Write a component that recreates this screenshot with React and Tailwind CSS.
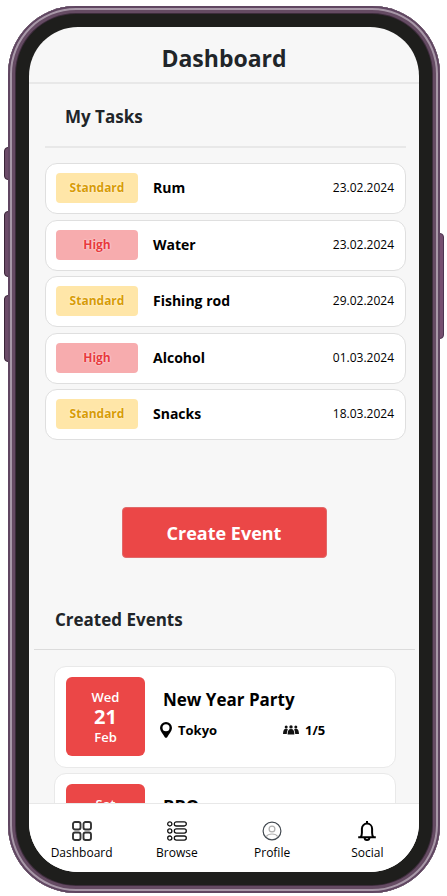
const tasks = [
  { priority: 'Standard', name: 'Rum', date: '23.02.2024' },
  { priority: 'High', name: 'Water', date: '23.02.2024' },
  { priority: 'Standard', name: 'Fishing rod', date: '29.02.2024' },
  { priority: 'High', name: 'Alcohol', date: '01.03.2024' },
  { priority: 'Standard', name: 'Snacks', date: '18.03.2024' },
];

const events = [
  { weekday: 'Wed', day: '21', month: 'Feb', title: 'New Year Party', place: 'Tokyo', people: '1/5' },
  { weekday: 'Sat', title: 'BBQ' },
];

const badgeStyles = {
  Standard: 'bg-[#ffe6a8] text-[#d89c06]',
  High: 'bg-[#f7acae] text-[#e8393d]',
};

function PinIcon() {
  return (
    <svg className="h-4 w-3" viewBox="0 0 12 16" aria-hidden="true">
      <path
        fillRule="evenodd"
        d="M6 0a6 6 0 0 1 6 6c0 3.200-3 6-4.800 9.200q-1.200 1.200-2.400 0C3 12 0 9.200 0 6a6 6 0 0 1 6-6Zm0 2.300a3.500 3.500 0 1 0 0 7 3.500 3.500 0 0 0 0-7Z"
      />
    </svg>
  );
}

function PeopleIcon() {
  return (
    <svg className="h-[10px] w-4" viewBox="0 0 16 10" fill="#111" aria-hidden="true">
      <circle cx="3.200" cy="1.900" r="1.500" />
      <circle cx="12.800" cy="1.900" r="1.500" />
      <circle cx="8" cy="1.900" r="1.700" />
      <path d="M0 9c.2-3.400.9-5.200 3.200-5.200.8 0 1.300.2 1.700.6C4.100 5.800 3.900 7.200 3.800 9ZM16 9c-.2-3.400-.9-5.200-3.200-5.200-.8 0-1.300.2-1.700.6.8 1.400 1 2.800 1.100 4.600ZM4.600 9.600C4.700 6 5.400 4.100 8 4.100s3.300 1.900 3.400 5.500Z" />
    </svg>
  );
}

function DashboardIcon() {
  return (
    <svg className="size-5" viewBox="0 0 20 20" fill="none" stroke="#333" strokeWidth="1.900" aria-hidden="true">
      <rect x="1" y="1" width="7.500" height="7.500" rx="2" />
      <rect x="11.500" y="1" width="7.500" height="7.500" rx="2" />
      <rect x="1" y="11.500" width="7.500" height="7.500" rx="2" />
      <rect x="11.500" y="11.500" width="7.500" height="7.500" rx="2" />
    </svg>
  );
}

function BrowseIcon() {
  return (
    <svg className="size-5" viewBox="0 0 20 20" fill="none" stroke="#111" strokeWidth="1.300" aria-hidden="true">
      <circle cx="2.800" cy="2.900" r="2.100" />
      <circle cx="2.800" cy="10" r="2.100" />
      <circle cx="2.800" cy="17.100" r="2.100" />
      <rect x="7.300" y=".8" width="12" height="4.200" rx="2.100" />
      <rect x="7.300" y="7.900" width="12" height="4.200" rx="2.100" />
      <rect x="7.300" y="15" width="12" height="4.200" rx="2.100" />
    </svg>
  );
}

function ProfileIcon() {
  return (
    <svg className="size-5" viewBox="0 0 20 20" fill="none" aria-hidden="true">
      <circle cx="10" cy="10" r="8.900" stroke="#444b52" strokeWidth="1.200" />
      <circle cx="10" cy="8" r="2.900" stroke="#b0b0b0" strokeWidth="1.200" />
      <path d="M4.200 15.600c1.200-2 3.300-2.600 5.800-2.600s4.600.6 5.800 2.600" stroke="#b0b0b0" strokeWidth="1.200" />
    </svg>
  );
}

function BellIcon() {
  return (
    <svg className="size-5" viewBox="0 0 20 20" fill="none" stroke="#000" strokeWidth="2" aria-hidden="true">
      <path d="M10 0v3M1.200 16.300h17.600" />
      <path d="M3.600 16.200c1-1 1.300-2.300 1.300-4.500V7.700a5.100 5.100 0 0 1 10.200 0v4c0 2.200.3 3.500 1.300 4.500" />
      <path d="M7.600 16.500c0 1.700 1 2.500 2.400 2.500s2.400-.8 2.400-2.500" />
    </svg>
  );
}

const tabs = [
  { label: 'Dashboard', Icon: DashboardIcon },
  { label: 'Browse', Icon: BrowseIcon },
  { label: 'Profile', Icon: ProfileIcon },
  { label: 'Social', Icon: BellIcon },
];

function TaskRow({ priority, name, date }) {
  return (
    <li className="flex h-[51px] items-center rounded-xl border border-[#dfdfdf] bg-white pr-[11px] pb-px pl-[10px]">
      <span
        className={`flex h-[30px] w-[82px] items-center justify-center rounded text-xs font-bold [text-shadow:0_0_2px_rgba(255,255,255,0.9)] ${badgeStyles[priority]}`}
      >
        {priority}
      </span>
      <span className="ml-[15px] flex-1 text-sm font-bold">{name}</span>
      <time className="text-xs">{date}</time>
    </li>
  );
}

function EventCard({ weekday, day, month, title, place, people }) {
  return (
    <li className="flex h-[102px] items-start rounded-xl border border-[#e9e9e9] bg-white px-[11px] pt-[10px]">
      <time className="flex size-[79px] flex-col items-center rounded-md bg-[#eb4747] pt-[10px] font-semibold text-white">
        <span className="text-[13px] leading-5">{weekday}</span>
        {day && <span className="text-xl leading-5 font-bold">{day}</span>}
        {month && <span className="text-[13px] leading-5">{month}</span>}
      </time>
      <div className="flex flex-1 flex-col pt-[11px] pl-[15px]">
        <h3 className="pl-[3px] text-[17px] leading-6 font-bold">{title}</h3>
        {place && (
          <div className="flex pt-2 text-[13px] leading-5 font-bold">
            <span className="flex w-[123px] items-center gap-[6px]">
              <PinIcon />
              {place}
            </span>
            <span className="flex items-center gap-[6px]">
              <PeopleIcon />
              {people}
            </span>
          </div>
        )}
      </div>
    </li>
  );
}

export default function App() {
  return (
    <div className="h-screen bg-white pt-[6px] pr-[7px] pb-[3px] pl-2 font-['Open_Sans','Noto_Sans',sans-serif] text-black">
      <div className="relative h-full">
        <div className="absolute top-[141px] -left-1 h-[33px] w-[5px] rounded-l-sm border border-[#3a2438] bg-[#6b4b68]" />
        <div className="absolute top-[205px] -left-1 h-[66px] w-[5px] rounded-l-sm border border-[#3a2438] bg-[#6b4b68]" />
        <div className="absolute top-[289px] -left-1 h-[67px] w-[5px] rounded-l-sm border border-[#3a2438] bg-[#6b4b68]" />
        <div className="absolute top-[227px] -right-1 h-[106px] w-[5px] rounded-r-sm border border-[#4d3450] bg-[#754f70]" />
        <div className="relative h-full rounded-[68px] bg-[#1e1e1c] p-[21px] shadow-[inset_0_0_0_2px_#604661,inset_0_0_0_4px_#a898a8,inset_0_0_0_7px_#654b63,inset_0_0_0_8px_#3d2c3c]">
          <div className="flex h-full flex-col overflow-hidden rounded-[49px] bg-[#f7f7f7]">
            <header className="flex h-[57px] shrink-0 items-center justify-center border-b-2 border-[#e8e8e8] pt-2">
              <h1 className="text-[23px] font-bold text-[#212529]">Dashboard</h1>
            </header>

            <main className="min-h-0 flex-1 overflow-hidden">
              <section className="pr-[13px] pl-4">
                <h2 className="flex h-16 items-center border-b-2 border-[#e8e8e8] pt-1 pl-5 text-[17px] font-bold text-[#212529]">
                  My Tasks
                </h2>
                <ul className="grid h-[292px] content-between pt-[15px]">
                  {tasks.map((task) => (
                    <TaskRow key={task.name} {...task} />
                  ))}
                </ul>
              </section>

              <div className="flex justify-center pt-[67px]">
                <button
                  type="button"
                  className="h-[51px] w-[205px] rounded border border-[#e06a6a] bg-[#eb4747] text-lg font-bold text-white"
                >
                  Create Event
                </button>
              </div>

              <section className="pr-1 pl-[5px] pt-8">
                <h2 className="flex h-[60px] items-center border-b border-[#dcdcdc] pl-[21px] text-[17px] font-bold text-[#212529]">
                  Created Events
                </h2>
                <ul className="flex flex-col gap-[5px] pt-4 pr-[19px] pl-5">
                  {events.map((event) => (
                    <EventCard key={event.title} {...event} />
                  ))}
                </ul>
              </section>
            </main>

            <nav className="h-[69px] shrink-0 border-t border-[#e8e8e8] bg-white pt-[17px] pr-1 pl-[5px]">
              <ul className="grid grid-cols-4">
                {tabs.map(({ label, Icon }) => (
                  <li key={label}>
                    <a href="#" className="flex flex-col items-center gap-1 text-xs leading-4">
                      <Icon />
                      {label}
                    </a>
                  </li>
                ))}
              </ul>
            </nav>
          </div>
        </div>
      </div>
    </div>
  );
}
